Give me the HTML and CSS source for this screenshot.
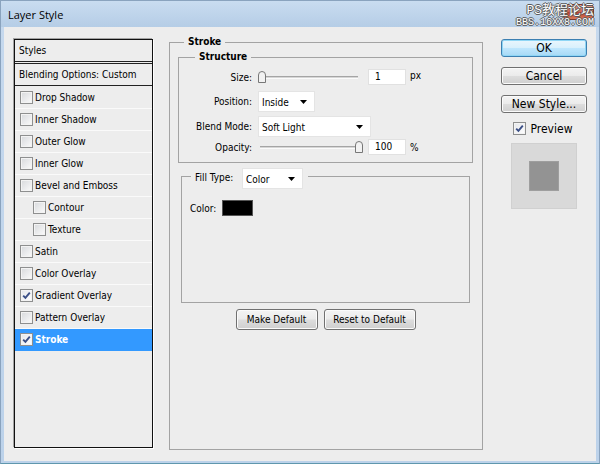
FILE: index.html
```html
<!DOCTYPE html>
<html>
<head>
<meta charset="utf-8">
<title>Layer Style</title>
<link rel="stylesheet" href="styles.css">
</head>
<body>
<div class="window">
  <div class="titlebar">
    <span class="title">Layer Style</span>
    <span class="close"></span>
    <div class="watermark">
      <span class="wm1">PS教程论坛</span>
      <span class="wm2">BBS.16XX8.COM</span>
    </div>
  </div>
  <div class="client">
    <div class="styles-panel">
      <div class="sp-head">Styles</div>
      <div class="sp-blend">Blending Options: Custom</div>
      <div class="sp-list">
        <div class="sp-row"><span class="cb"></span><span>Drop Shadow</span></div>
        <div class="sp-row"><span class="cb"></span><span>Inner Shadow</span></div>
        <div class="sp-row"><span class="cb"></span><span>Outer Glow</span></div>
        <div class="sp-row"><span class="cb"></span><span>Inner Glow</span></div>
        <div class="sp-row"><span class="cb"></span><span>Bevel and Emboss</span></div>
        <div class="sp-row sub"><span class="cb"></span><span>Contour</span></div>
        <div class="sp-row sub"><span class="cb"></span><span>Texture</span></div>
        <div class="sp-row"><span class="cb"></span><span>Satin</span></div>
        <div class="sp-row"><span class="cb"></span><span>Color Overlay</span></div>
        <div class="sp-row"><span class="cb on"><svg viewBox="0 0 11 11" width="11" height="11"><path d="M2.2 5.6 L4.4 7.9 L8.8 2.6" fill="none" stroke="#3b4f86" stroke-width="1.9"/></svg></span><span>Gradient Overlay</span></div>
        <div class="sp-row"><span class="cb"></span><span>Pattern Overlay</span></div>
        <div class="sp-row sel"><span class="cb on"><svg viewBox="0 0 11 11" width="11" height="11"><path d="M2.2 5.6 L4.4 7.9 L8.8 2.6" fill="none" stroke="#3b4f86" stroke-width="1.9"/></svg></span><span>Stroke</span></div>
      </div>
    </div>

    <div class="main">
      <fieldset class="grp stroke">
        <legend class="lg-stroke">Stroke</legend>
        <fieldset class="grp structure">
          <legend class="lg-structure">Structure</legend>
          <div class="frow r-size">
            <label class="flabel">Size:</label>
            <div class="slider"><span class="track"></span><span class="thumb thumb-left"><svg viewBox="0 0 8 12" width="8" height="12"><path d="M0.5 11.5 V4 Q0.5 0.5 4 0.5 Q7.5 0.5 7.5 4 V11.5 Z" fill="#f2f2f2" stroke="#777"/></svg></span></div>
            <span class="num">1</span>
            <span class="unit px">px</span>
          </div>
          <div class="frow r-pos">
            <label class="flabel">Position:</label>
            <div class="select sel-pos"><span>Inside</span><svg viewBox="0 0 7 4" width="7" height="4"><path d="M0 0 H7 L3.5 4 Z" fill="#000"/></svg></div>
          </div>
          <div class="frow r-blend">
            <label class="flabel">Blend Mode:</label>
            <div class="select sel-blend"><span>Soft Light</span><svg viewBox="0 0 7 4" width="7" height="4"><path d="M0 0 H7 L3.5 4 Z" fill="#000"/></svg></div>
          </div>
          <div class="frow r-opac">
            <label class="flabel">Opacity:</label>
            <div class="slider slider-opac"><span class="track"></span><span class="thumb thumb-right"><svg viewBox="0 0 8 12" width="8" height="12"><path d="M0.5 11.5 V4 Q0.5 0.5 4 0.5 Q7.5 0.5 7.5 4 V11.5 Z" fill="#f2f2f2" stroke="#777"/></svg></span></div>
            <span class="num">100</span>
            <span class="unit">%</span>
          </div>
        </fieldset>

        <fieldset class="grp fill">
          <legend class="lg-fill"><span class="lg-fill-inner"><span class="fill-label">Fill Type:</span><span class="select sel-fill"><span>Color</span><svg viewBox="0 0 7 4" width="7" height="4"><path d="M0 0 H7 L3.5 4 Z" fill="#000"/></svg></span></span></legend>
          <div class="color-row"><span class="color-label">Color:</span><span class="swatch"></span></div>
        </fieldset>

        <div class="btnrow">
          <button class="btn btn-make">Make Default</button>
          <button class="btn btn-reset">Reset to Default</button>
        </div>
      </fieldset>
    </div>

    <div class="side">
      <button class="sbtn ok">OK</button>
      <button class="sbtn">Cancel</button>
      <button class="sbtn">New Style...</button>
      <div class="preview-row"><span class="cb on"><svg viewBox="0 0 11 11" width="11" height="11"><path d="M2.2 5.6 L4.4 7.9 L8.8 2.6" fill="none" stroke="#3b4f86" stroke-width="1.9"/></svg></span><span class="pv-text">Preview</span></div>
      <div class="preview-box"><span class="preview-inner"></span></div>
    </div>
  </div>
</div>
</body>
</html>
```

FILE: styles.css
```css
html, body {
  margin: 0;
  padding: 0;
}
body {
  width: 600px;
  height: 464px;
  overflow: hidden;
  font-family: "DejaVu Sans Condensed", "Liberation Sans", sans-serif;
  font-size: 10px;
  color: #000;
  background: #c7d9ee;
}
.window {
  width: 600px;
  height: 464px;
  box-sizing: border-box;
  display: flex;
  flex-direction: column;
  background: linear-gradient(#c6d9ee, #bcd2ea);
  border: 1px solid #8aa3be;
  border-bottom-color: #5f97ad;
}

/* title bar */
.titlebar {
  position: relative;
  height: 26px;
  flex: none;
  display: flex;
  align-items: flex-start;
  padding-left: 7px;
  background: linear-gradient(#c9dcf0, #b5cde6);
}
.title {
  font-family: "Open Sans", "Noto Sans", sans-serif;
  font-size: 11px;
  line-height: 14px;
  margin-top: 7px;
  color: #000;
}
.close {
  margin-left: auto;
  margin-top: 3px;
  margin-right: 5px;
  width: 31px;
  height: 16px;
  border-radius: 4px;
  box-sizing: border-box;
  border: 1px solid #7c3a2e;
  background: linear-gradient(#e9a091, #d0624d 50%, #c0412c 52%, #d77a5a);
}
.watermark {
  position: absolute;
  right: 5px;
  top: 2px;
  display: flex;
  flex-direction: column;
  align-items: flex-end;
  color: #fff;
  text-shadow: 1px 0 #5a5a5a, -1px 0 #5a5a5a, 0 1px #5a5a5a, 0 -1px #5a5a5a;
}
.wm1 {
  font-family: "Liberation Mono", "Noto Sans CJK SC", monospace;
  font-size: 13px;
  line-height: 15px;
}
.wm2 {
  font-family: "Liberation Mono", monospace;
  font-size: 10px;
  line-height: 10px;
}

/* client */
.client {
  flex: 1;
  margin: 0 3px 2px 3px;
  background: #ededed;
  display: flex;
  align-items: flex-start;
}

/* styles panel */
.styles-panel {
  margin-top: 12px;
  margin-left: 10px;
  width: 139px;
  height: 409px;
  box-sizing: border-box;
  border: 1px solid #111;
  box-shadow: -1px -1px 0 #a3a3a3, 1px 1px 0 #fff;
  background: #ededed;
}
.sp-head {
  height: 21px;
  line-height: 21px;
  padding-left: 4px;
  border-bottom: 1px solid #222;
  margin-bottom: 1px;
}
.sp-blend {
  height: 21px;
  line-height: 21px;
  padding-left: 4px;
  border-top: 1px solid #222;
  border-bottom: 1px solid #222;
}
.sp-list {
  margin-top: 1px;
}
.sp-row {
  height: 21px;
  border-bottom: 1px solid #fafafa;
  display: flex;
  align-items: center;
  padding-left: 5px;
  gap: 2px;
}
.sp-row.sub {
  padding-left: 18px;
}
.sp-row.sel {
  background: #3399ff;
  color: #fff;
  font-weight: bold;
  border-bottom-color: #3399ff;
}

.cb {
  width: 13px;
  height: 13px;
  flex: none;
  box-sizing: border-box;
  border: 1px solid #8e8f8f;
  background: linear-gradient(135deg, #d7d9dc, #fbfbfb);
  box-shadow: inset 0 0 0 1px #f3f3f3;
  display: inline-flex;
  align-items: center;
  justify-content: center;
}
.cb.on {
  background: linear-gradient(135deg, #e4e6ea, #ffffff);
}

/* main */
.main {
  margin-left: 16px;
  margin-top: 8px;
}
fieldset.grp {
  margin: 0;
  padding: 0;
  min-width: 0;
  box-sizing: border-box;
  border: 1px solid #a3a3a3;
}
fieldset.grp > legend {
  line-height: 14px;
  padding: 0 4px;
}
.stroke {
  width: 314px;
  height: 415px;
  padding: 1px 9px 0 8px !important;
}
.lg-stroke {
  margin-left: 6px;
  font-weight: bold;
}
.structure {
  width: 295px;
  height: 113px;
  padding-top: 2px !important;
}
.lg-structure {
  margin-left: 16px;
  font-weight: bold;
}
.frow {
  display: flex;
  align-items: center;
  height: 22px;
}
.r-pos { margin-top: 2px; }
.r-blend { margin-top: 3px; }
.r-opac { height: 20px; }
.flabel {
  width: 73px;
  text-align: right;
  margin-right: 6px;
  flex: none;
}
.slider {
  position: relative;
  width: 100px;
  height: 14px;
  display: flex;
  align-items: center;
}
.slider-opac {
  width: 98px;
  margin-left: 2px;
}
.track {
  display: block;
  width: 100%;
  height: 3px;
  box-sizing: border-box;
  border-top: 1px solid #a5a5a5;
  background: #d6d6d6;
  border-bottom: 1px solid #fbfbfb;
}
.thumb {
  position: absolute;
  top: 1px;
  width: 8px;
  height: 12px;
  line-height: 0;
}
.thumb-left { left: 0; }
.thumb-right { left: 95px; }
.num {
  margin-left: 10px;
  width: 38px;
  height: 16px;
  box-sizing: border-box;
  background: #fff;
  border: 1px solid #e1e1e1;
  padding-left: 6px;
  line-height: 14px;
}
.unit {
  margin-left: 4px;
}
.unit.px {
  margin-top: -3px;
}
.select {
  height: 21px;
  box-sizing: border-box;
  background: #fff;
  border: 1px solid #e4e4e4;
  display: flex;
  align-items: center;
  justify-content: space-between;
  padding: 2px 7px 0 3px;
}
.select svg { margin-top: -1px; }
.sel-pos { width: 57px; }
.sel-blend { width: 113px; }

.fill {
  width: 289px;
  height: 139px;
  margin-top: 1px !important;
  margin-left: 3px !important;
  padding: 0 0 0 8px !important;
}
.lg-fill {
  margin-left: 1px;
  padding: 4px 5px 0 4px !important;
  line-height: normal !important;
}
.lg-fill-inner {
  display: flex;
  align-items: center;
}
.fill-label {
  width: 47px;
  margin-top: -3px;
}
.sel-fill {
  width: 61px;
}
.color-row {
  margin-top: 11px;
  display: flex;
  align-items: center;
  height: 16px;
}
.color-label {
  width: 32px;
}
.swatch {
  width: 31px;
  height: 16px;
  box-sizing: border-box;
  background: #000;
  border: 1px solid #555;
}

.btnrow {
  margin-top: 6px;
  display: flex;
  justify-content: center;
  gap: 6px;
}
.btn, .sbtn {
  font-family: inherit;
  font-size: 10px;
  color: #000;
  margin: 0;
  padding: 0;
  box-sizing: border-box;
  border: 1px solid #707070;
  border-radius: 3px;
  background: linear-gradient(#f4f4f4, #ebebeb 48%, #dddddd 52%, #cfcfcf);
  box-shadow: inset 0 0 0 1px #fbfbfb;
}
.btn {
  height: 21px;
}
.btn-make { width: 82px; }
.btn-reset { width: 92px; }

/* side */
.side {
  margin-left: 18px;
  margin-top: 12px;
  width: 86px;
  display: flex;
  flex-direction: column;
  align-items: center;
}
.sbtn {
  width: 86px;
  height: 18px;
  font-size: 12px;
  line-height: 14px;
  margin-bottom: 10px;
}
.sbtn.ok {
  border-color: #3c7fb1;
  background: linear-gradient(#eaf6fd, #d9f0fc 48%, #bee6fd 52%, #a7d9f5);
  box-shadow: inset 0 0 0 1px #8fd6f5;
}
.preview-row {
  margin-top: -1px;
  margin-left: -3px;
  display: flex;
  align-items: center;
  gap: 5px;
  height: 13px;
}
.pv-text {
  font-size: 12px;
}
.preview-box {
  margin-top: 8px;
  width: 66px;
  height: 66px;
  box-sizing: border-box;
  background: #d9d9d9;
  border: 1px solid #d0d0d0;
  display: flex;
  align-items: center;
  justify-content: center;
}
.preview-inner {
  width: 30px;
  height: 30px;
  box-sizing: border-box;
  background: #939393;
  border: 1px solid #9e9e9e;
}
```
